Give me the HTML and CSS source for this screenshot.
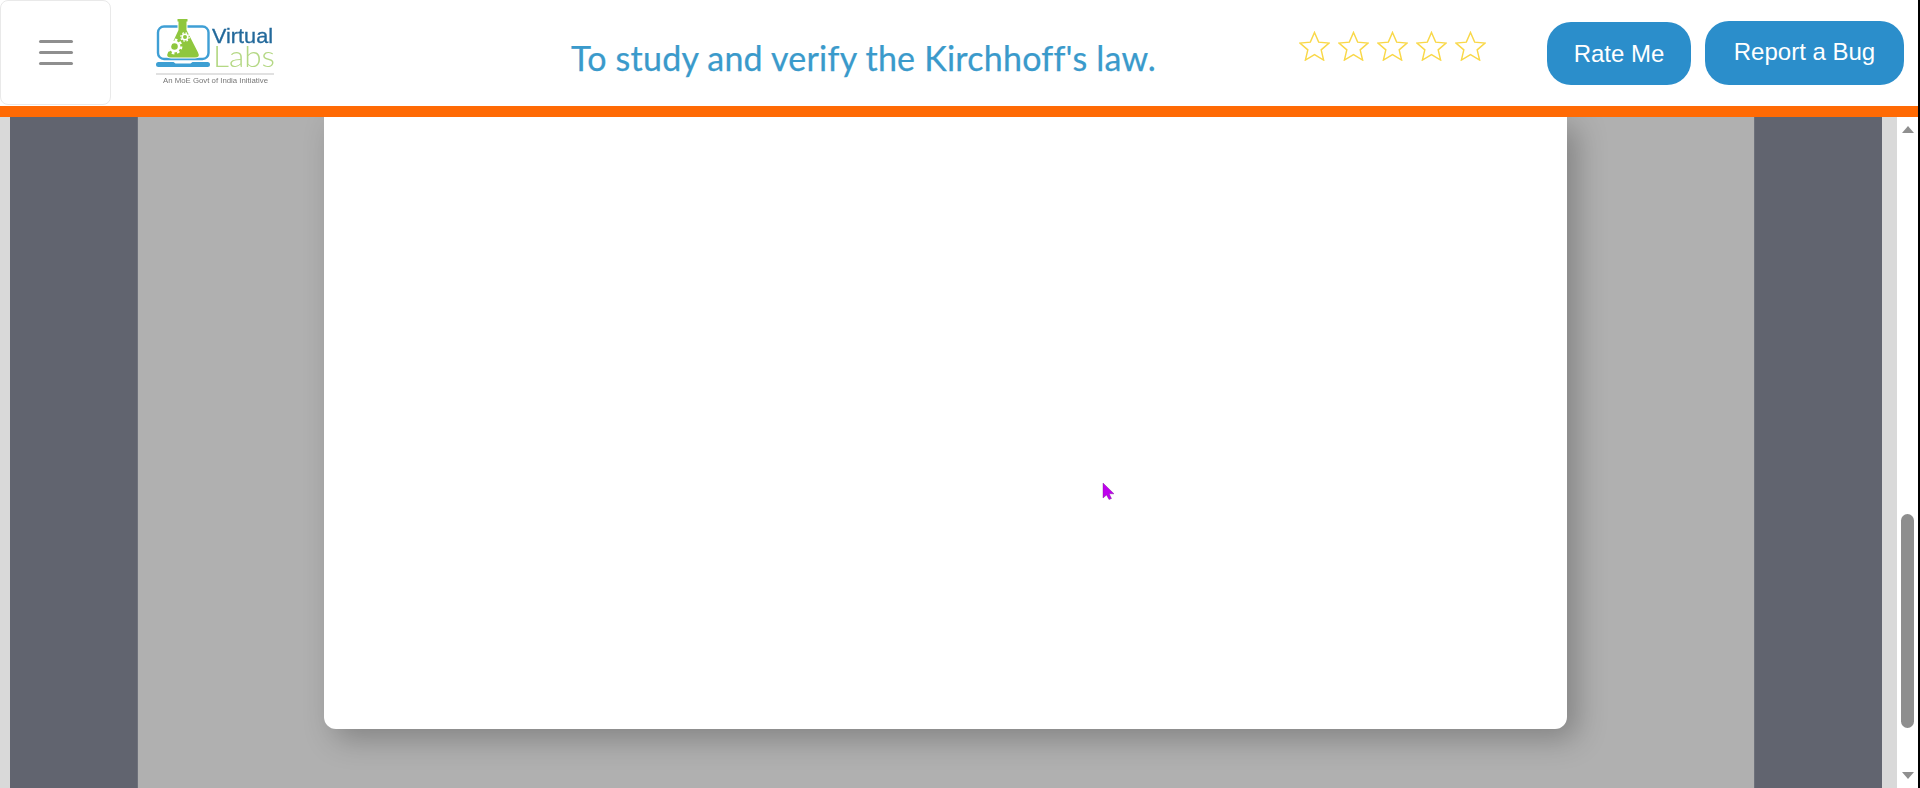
FILE: index.html
```html
<!DOCTYPE html>
<html lang="en">
<head>
<meta charset="utf-8">
<title>Kirchhoff's law</title>
<link rel="stylesheet" href="styles.css">
</head>
<body>
<div class="page">
  <header class="topbar">
    <button class="menu-btn" aria-label="Menu">
      <span class="menu-line"></span>
      <span class="menu-line"></span>
      <span class="menu-line"></span>
    </button>
    <svg class="logo" width="122" height="70" viewBox="155 17 122 70">
      <rect x="158" y="26.500" width="50.500" height="32.500" rx="6" class="logo-screen"/>
      <path d="M156 64.500q0-2.500 2.500-2.500h15l2 1.500h15l2-1.500h15q2.500 0 2.500 2.500t-2.500 2.500h-49q-2.500 0-2.500-2.500z" class="logo-base"/>
      <path d="M177.500 19h10v2.500h-1v8.500L198 52.500q2.500 5-3 5h-24q-5.500 0-3-5L178.500 30v-8.500h-1z" class="logo-flask"/>
      <circle cx="174.500" cy="46.500" r="4.600" class="logo-gear"/>
      <circle cx="174.500" cy="46.500" r="6.800" class="logo-gear-teeth"/>
      <circle cx="185" cy="37" r="2.800" class="logo-gear-small"/>
      <circle cx="185" cy="37" r="4.200" class="logo-gear-small-teeth"/>
      <text x="212" y="43" textLength="61" lengthAdjust="spacingAndGlyphs" class="logo-virtual">Virtual</text>
      <text x="213" y="67" textLength="62" lengthAdjust="spacingAndGlyphs" class="logo-labs">Labs</text>
      <rect x="156" y="73.500" width="118" height="1" class="logo-rule"/>
      <text x="163" y="83" textLength="105" lengthAdjust="spacingAndGlyphs" class="logo-tagline">An MoE Govt of India Initiative</text>
    </svg>
    <h1 class="title">To study and verify the Kirchhoff's law.</h1>
    <div class="stars">
      <svg class="star" viewBox="0 0 32 31"><path d="M16 1.500l4.300 10 10.700 1-8.100 7 2.500 10.500L16 24.500 6.600 30l2.500-10.500-8.100-7 10.700-1z"/></svg>
      <svg class="star" viewBox="0 0 32 31"><path d="M16 1.500l4.300 10 10.700 1-8.100 7 2.500 10.500L16 24.500 6.600 30l2.500-10.500-8.100-7 10.700-1z"/></svg>
      <svg class="star" viewBox="0 0 32 31"><path d="M16 1.500l4.300 10 10.700 1-8.100 7 2.500 10.500L16 24.500 6.600 30l2.500-10.500-8.100-7 10.700-1z"/></svg>
      <svg class="star" viewBox="0 0 32 31"><path d="M16 1.500l4.300 10 10.700 1-8.100 7 2.500 10.500L16 24.500 6.600 30l2.500-10.500-8.100-7 10.700-1z"/></svg>
      <svg class="star" viewBox="0 0 32 31"><path d="M16 1.500l4.300 10 10.700 1-8.100 7 2.500 10.500L16 24.500 6.600 30l2.500-10.500-8.100-7 10.700-1z"/></svg>
    </div>
    <button class="pill pill-rate">Rate Me</button>
    <button class="pill pill-bug">Report a Bug</button>
  </header>
  <main class="stage">
    <div class="edge"></div>
    <div class="gutter"></div>
    <div class="backdrop">
      <div class="sheet"></div>
    </div>
    <div class="gutter gutter-right"></div>
    <div class="edge edge-right"></div>
    <div class="scrollbar">
      <span class="arrow arrow-up"></span>
      <span class="thumb"></span>
      <span class="arrow arrow-down"></span>
    </div>
    <svg class="cursor" width="13" height="18" viewBox="0 0 13 18">
      <path d="M1 1v15l3.500-3 2.500 4.500 2.500-1-2.300-4.700H12z"/>
    </svg>
  </main>
</div>
</body>
</html>
```

FILE: styles.css
```css
* { box-sizing: border-box; }
html, body {
  margin: 0;
  height: 100%;
  background: #000;
  overflow: hidden;
}
.page {
  width: 1918px;
  height: 788px;
  display: flex;
  flex-direction: column;
}
.topbar {
  height: 117px;
  flex: none;
  display: flex;
  align-items: flex-start;
  background: #fff;
  border-bottom: 11px solid #ff6a04;
}
.menu-btn {
  width: 111px;
  height: 105px;
  margin: 0;
  padding: 0;
  flex: none;
  display: flex;
  flex-direction: column;
  align-items: center;
  justify-content: center;
  gap: 8px;
  background: #fff;
  border: 1px solid #e9e9e9;
  border-radius: 8px;
}
.menu-line {
  display: block;
  width: 34px;
  height: 3px;
  border-radius: 2px;
  background: #8f8f8f;
}
.logo {
  flex: none;
  margin: 17px 0 0 44px;
  filter: blur(0.4px);
}
.logo-screen { fill: none; stroke: #3f9fd5; stroke-width: 2.400; }
.logo-base { fill: #3d9fd3; }
.logo-flask {
  fill: #8fc73e;
  stroke: #fff;
  stroke-width: 2;
  paint-order: stroke;
}
.logo-gear { fill: none; stroke: #fff; stroke-width: 2.600; }
.logo-gear-teeth { fill: none; stroke: #fff; stroke-width: 2.200; stroke-dasharray: 2.700 2.640; }
.logo-gear-small { fill: none; stroke: #fff; stroke-width: 1.600; }
.logo-gear-small-teeth { fill: none; stroke: #fff; stroke-width: 1.200; stroke-dasharray: 1.700 1.600; }
.logo-virtual {
  font-family: "Liberation Sans", sans-serif;
  font-size: 21px;
  fill: #23699b;
  stroke: #23699b;
  stroke-width: 0.300;
}
.logo-labs {
  font-family: "Lato", sans-serif;
  font-size: 30px;
  font-weight: 300;
  fill: #b4d884;
}
.logo-rule { fill: #c4c4c4; }
.logo-tagline {
  font-family: "Liberation Sans", sans-serif;
  font-size: 7px;
  fill: #777;
}
.title {
  flex: none;
  width: 584px;
  margin: 37px 0 0 294px;
  font-family: "Lato", sans-serif;
  font-size: 34px;
  line-height: 42px;
  font-weight: 400;
  letter-spacing: 0.23px;
  -webkit-text-stroke: 0.25px #3a9acb;
  color: #3a9acb;
  white-space: nowrap;
}
.stars {
  flex: none;
  display: flex;
  gap: 8px;
  margin: 31px 0 0 144px;
}
.star {
  display: block;
  width: 31px;
  height: 30px;
  fill: #fff;
  stroke: #f9d849;
  stroke-width: 1.500;
}
.pill {
  flex: none;
  margin: 0;
  padding: 0;
  border: 0;
  background: #2b8ecb;
  color: #fff;
  font-family: "Liberation Sans", sans-serif;
  font-size: 24px;
  border-radius: 24px;
}
.pill-rate {
  width: 144px;
  height: 63px;
  margin: 22px 0 0 61px;
}
.pill-bug {
  width: 199px;
  height: 64px;
  margin: 21px 0 0 14px;
  padding-bottom: 3px;
  font-weight: 400;
}
.stage {
  position: relative;
  flex: 1;
  min-height: 0;
  display: flex;
  background: #fff;
  overflow: hidden;
}
.edge {
  flex: none;
  width: 10px;
  background: #d9d9d9;
}
.edge-right { width: 15px; }
.gutter {
  flex: none;
  width: 128px;
  background: #61646f;
  border-right: 1px solid #6e717b;
}
.gutter-right {
  border-right: 0;
  border-left: 1px solid #6e717b;
}
.backdrop {
  flex: none;
  width: 1616px;
  padding: 0 187px 59px 186px;
  background: #b0b0b0;
  overflow: hidden;
  display: flex;
}
.sheet {
  flex: 1;
  background: #fff;
  border-radius: 0 0 12px 12px;
  box-shadow: 10px 10px 30px rgba(0, 0, 0, 0.26);
}
.scrollbar {
  flex: none;
  width: 21px;
  padding-top: 9px;
  display: flex;
  flex-direction: column;
  align-items: center;
  background: #fff;
}
.arrow {
  display: block;
  flex: none;
  width: 0;
  height: 0;
  border-left: 6.500px solid transparent;
  border-right: 6.500px solid transparent;
}
.arrow-up { border-bottom: 7px solid #8f8f8f; }
.arrow-down { border-top: 7px solid #8f8f8f; margin-top: 44px; }
.thumb {
  display: block;
  flex: none;
  width: 13px;
  height: 214px;
  margin-top: 381px;
  border-radius: 7px;
  background: #8e8e8e;
}
.cursor {
  position: absolute;
  left: 1102px;
  top: 365px;
}
.cursor path {
  fill: #bf00ee;
  stroke: #7a1a90;
  stroke-width: 0.400;
}
```
